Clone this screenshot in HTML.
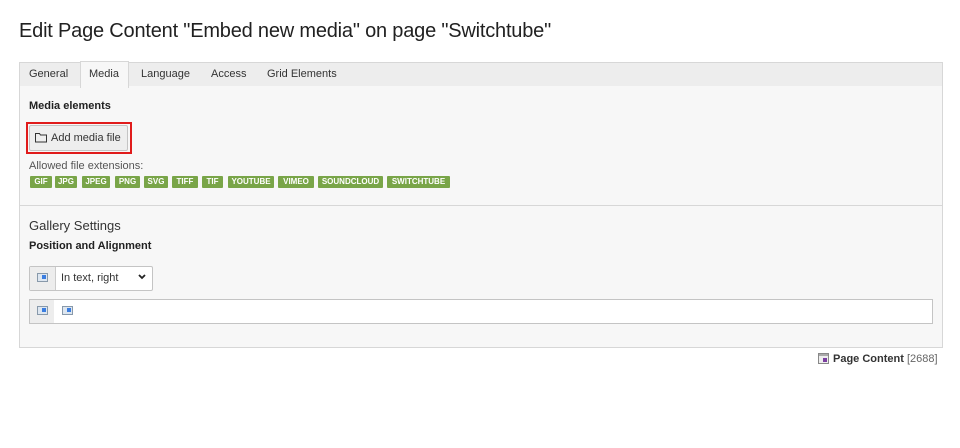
<!DOCTYPE html>
<html><head><meta charset="utf-8"><style>
*{box-sizing:border-box;margin:0;padding:0}
body{width:960px;height:448px;background:#fff;font-family:"Liberation Sans",sans-serif;font-size:11px;color:#333;position:relative;overflow:hidden}
.a{position:absolute}
h1{position:absolute;left:19px;top:20px;font-size:20px;font-weight:normal;color:#212121;letter-spacing:-0.2px}
.tabs{left:19px;top:62px;width:924px;height:25px;background:#ededed;border:1px solid #d7d7d7}
.tab{position:absolute;top:6px;font-size:11px;color:#333}
.panel{left:19px;top:86px;width:924px;height:262px;background:#f7f7f7;border:1px solid #d7d7d7;border-top:none}
.act{left:80px;top:61px;width:49px;height:27px;background:#f7f7f7;border:1px solid #d7d7d7;border-bottom:none}
.b{font-weight:bold;color:#212121}
.badge{position:absolute;top:176px;height:12px;background:#79a548;color:#fff;font-size:8px;font-weight:bold;line-height:12px;text-align:center;border-radius:1px}
.ic{position:absolute;width:11px;height:9px;border:1px solid #8899aa;background:#dde6f0}
.ic:after{content:"";position:absolute;right:1px;top:1px;width:4px;height:4px;background:#3a7de0}
</style></head><body>
<h1>Edit Page Content "Embed new media" on page "Switchtube"</h1>
<div class="a tabs"></div>
<div class="a panel"></div>
<div class="a act"></div>
<span class="a tab" style="left:29px;top:68px">General</span>
<span class="a tab" style="left:89px;top:68px">Media</span>
<span class="a tab" style="left:141px;top:68px">Language</span>
<span class="a tab" style="left:211px;top:68px">Access</span>
<span class="a tab" style="left:267px;top:68px">Grid Elements</span>
<div class="a b" style="left:29px;top:100px">Media elements</div>
<div class="a" style="left:26px;top:122px;width:106px;height:32px;border:2px solid #e01b1b"></div>
<div class="a" style="left:29px;top:125px;width:99px;height:26px;background:#eee;border:1px solid #c4c4c4;border-radius:2px"></div>
<svg class="a" style="left:35px;top:132px" width="12" height="11" viewBox="0 0 12 11"><path d="M0.5 1.5h4l1 1.5h6v7h-11z" fill="none" stroke="#333"/></svg>
<span class="a" style="left:51px;top:132px;color:#333">Add media file</span>
<div class="a" style="left:29px;top:160px;color:#555">Allowed file extensions:</div>
<div class="badge" style="left:30px;width:22px">GIF</div>
<div class="badge" style="left:55px;width:22px">JPG</div>
<div class="badge" style="left:82px;width:28px">JPEG</div>
<div class="badge" style="left:115px;width:25px">PNG</div>
<div class="badge" style="left:144px;width:24px">SVG</div>
<div class="badge" style="left:172px;width:26px">TIFF</div>
<div class="badge" style="left:202px;width:21px">TIF</div>
<div class="badge" style="left:228px;width:46px">YOUTUBE</div>
<div class="badge" style="left:278px;width:36px">VIMEO</div>
<div class="badge" style="left:318px;width:65px">SOUNDCLOUD</div>
<div class="badge" style="left:387px;width:63px">SWITCHTUBE</div>
<div class="a" style="left:20px;top:205px;width:922px;height:1px;background:#d7d7d7"></div>
<div class="a" style="left:29px;top:218px;font-size:13px;color:#333">Gallery Settings</div>
<div class="a b" style="left:29px;top:240px">Position and Alignment</div>
<div class="a" style="left:29px;top:266px;width:124px;height:25px;background:#fff;border:1px solid #c4c4c4;border-radius:2px"></div>
<div class="a" style="left:30px;top:267px;width:26px;height:23px;background:#ededed;border-right:1px solid #ccc"></div>
<span class="ic" style="left:37px;top:273px"></span>
<span class="a" style="left:61px;top:272px;color:#333">In text, right</span>
<svg class="a" style="left:138px;top:274px" width="8" height="6" viewBox="0 0 8 6"><path d="M1 1l3 3 3-3" fill="none" stroke="#222" stroke-width="1.8"/></svg>
<div class="a" style="left:29px;top:299px;width:904px;height:25px;background:#fff;border:1px solid #c4c4c4"></div>
<div class="a" style="left:30px;top:300px;width:24px;height:23px;background:#ededed"></div>
<span class="ic" style="left:37px;top:306px"></span>
<span class="ic" style="left:62px;top:306px"></span>
<svg class="a" style="left:818px;top:353px" width="11" height="11" viewBox="0 0 11 11"><rect x="0.5" y="0.5" width="10" height="10" fill="#eee" stroke="#888"/><rect x="1" y="1" width="9" height="2" fill="#aaa"/><rect x="5" y="5" width="4" height="4" fill="#7a3ea0"/></svg>
<span class="a" style="left:833px;top:353px"><b style="color:#333">Page Content</b> <span style="color:#666">[2688]</span></span>
</body></html>
